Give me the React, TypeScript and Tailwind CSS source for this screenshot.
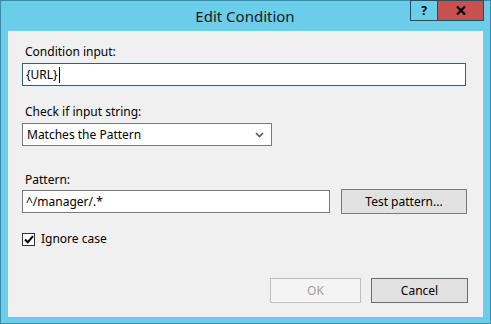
import React from "react";

const font = { fontFamily: '"Noto Sans", "Open Sans", sans-serif' };

export default function App() {
  return (
    <div
      className="w-[491px] h-[324px] bg-[#6acde9] border border-[#3d8cab] flex flex-col text-[12px] text-[#000]"
      style={font}
    >
      <div className="h-[30px] flex shrink-0">
        <div className="flex-1 flex items-center justify-center pl-[79px] pt-[1px] text-[15px] text-[#1a1a1a]">
          Edit Condition
        </div>
        <div className="flex h-[21px] -mt-[1px] mr-[6px]">
          <div className="w-[28px] h-[21px] border border-[#2a4d5c] flex items-center justify-center text-[12px] font-bold text-[#000]">
            ?
          </div>
          <div className="w-[46px] h-[21px] bg-[#c75050] border border-l-0 border-[#2a4d5c] flex items-center justify-center">
            <svg width="10" height="9" viewBox="0 0 10 9">
              <path d="M1 0.5 L9 8.5 M9 0.5 L1 8.5" stroke="#000" strokeWidth="2.2" />
            </svg>
          </div>
        </div>
      </div>
      <div className="flex-1 ml-[7px] mr-[7px] mb-[6px] bg-[#f0f0f0] pl-[14px] pr-[16px] flex flex-col">
        <div className="mt-[13px] h-[16px] leading-[16px] pl-[3px]">Condition input:</div>
        <div className="mt-[3px] w-[444px] h-[23px] bg-white border border-[#3c5b6e] flex items-center pl-[3px]">
          <span>{"{URL}"}</span>
          <span className="w-px h-[16px] bg-black ml-[1px]"></span>
        </div>
        <div className="mt-[18px] h-[16px] leading-[16px] pl-[3px]">Check if input string:</div>
        <div className="mt-[3px] w-[250px] h-[23px] bg-white border border-[#7a7a7a] flex items-center justify-between pl-[4px] pr-[7px]">
          <span>Matches the Pattern</span>
          <svg width="9" height="6" viewBox="0 0 9 6">
            <path d="M1 1 L4.5 4.5 L8 1" stroke="#555" strokeWidth="1.6" fill="none" />
          </svg>
        </div>
        <div className="mt-[26px] h-[16px] leading-[16px] pl-[3px]">Pattern:</div>
        <div className="mt-[1px] flex items-center gap-[11px] w-[445px]">
          <div className="w-[308px] h-[23px] bg-white border border-[#7a7a7a] flex items-center pl-[3px]">
            ^/manager/.*
          </div>
          <div className="w-[126px] h-[25px] bg-[#e1e1e1] border border-[#7a7a7a] flex items-center justify-center">
            Test pattern...
          </div>
        </div>
        <div className="mt-[17px] h-[16px] flex items-center">
          <div className="w-[13px] h-[13px] bg-white border border-[#333] flex items-center justify-center">
            <svg width="10" height="9" viewBox="0 0 10 9">
              <path d="M1 4.5 L3.8 7.3 L9 1.2" stroke="#000" strokeWidth="2" fill="none" />
            </svg>
          </div>
          <span className="ml-[6px]">Ignore case</span>
        </div>
        <div className="mt-auto mb-[14px] flex justify-end gap-[10px] mr-[-1px]">
          <div className="w-[91px] h-[25px] bg-[#f4f4f4] border border-[#bfbfbf] flex items-center justify-center text-[#a0a0a0]">
            OK
          </div>
          <div className="w-[97px] h-[25px] bg-[#e1e1e1] border border-[#6e6e6e] flex items-center justify-center">
            Cancel
          </div>
        </div>
      </div>
    </div>
  );
}
